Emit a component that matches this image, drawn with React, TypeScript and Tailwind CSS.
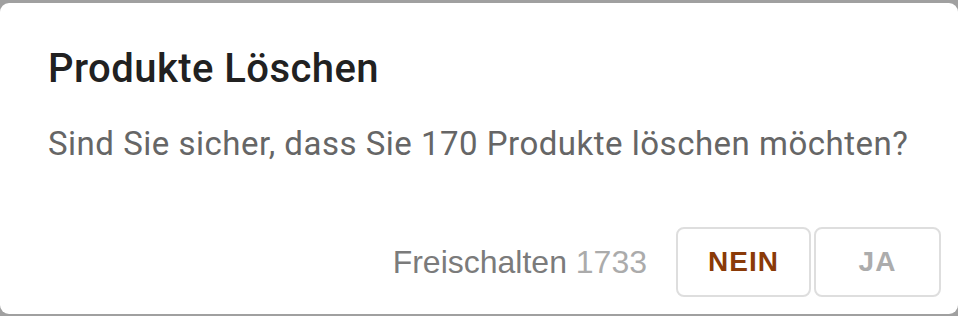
export default function App() {
  return (
    <div className="w-[958px] h-[316px] bg-[#a0a0a0] pt-[3px] overflow-hidden">
      <div className="w-[958px] h-[311px] bg-white rounded-[9px] flex flex-col">
        <h1
          className="pl-[48px] pt-[42px] text-[40px] leading-[48px] font-medium tracking-[0.45px] text-[#212121]"
          style={{ fontFamily: "Roboto, 'Noto Sans', sans-serif" }}
        >
          Produkte Löschen
        </h1>
        <p
          className="pl-[48px] mt-[31px] text-[33px] leading-[40px] tracking-[0.5px] text-[#666666]"
          style={{ fontFamily: "Roboto, 'Noto Sans', sans-serif" }}
        >
          Sind Sie sicher, dass Sie 170 Produkte löschen möchten?
        </p>
        <div
          className="mt-auto flex items-center justify-end pr-[17px] pb-[17px]"
          style={{ fontFamily: "'Liberation Sans', Arial, sans-serif" }}
        >
          <span className="text-[32px] leading-[40px] text-[#7b7b7b] mr-[29px]">
            Freischalten <span className="text-[#ababab]">1733</span>
          </span>
          <button className="w-[135px] h-[70px] border-2 border-[#dedede] rounded-[8px] text-[28px] font-bold tracking-[1px] text-[#8a3a08] flex items-center justify-center">
            NEIN
          </button>
          <button className="ml-[3px] w-[127px] h-[70px] border-2 border-[#dedede] rounded-[8px] text-[28px] font-bold tracking-[1px] text-[#acacac] flex items-center justify-center">
            JA
          </button>
        </div>
      </div>
    </div>
  );
}
